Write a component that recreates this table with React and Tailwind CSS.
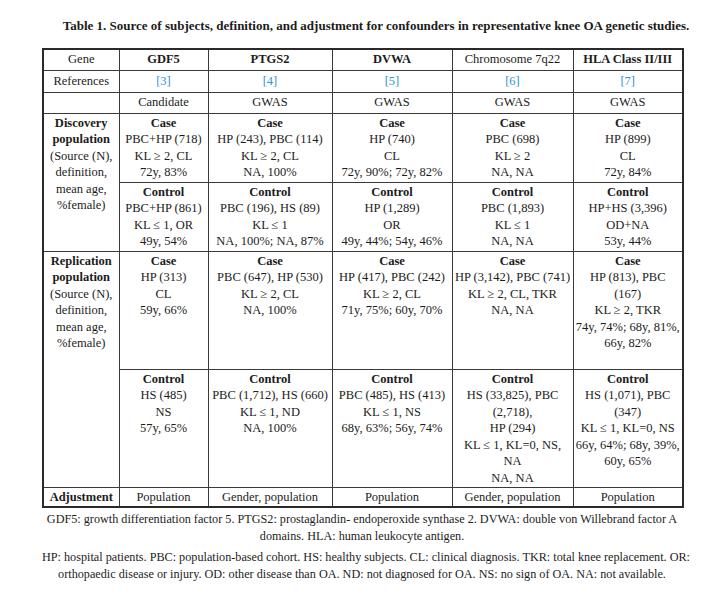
import React from "react";

const serifStack = {
  fontFamily: '"Liberation Serif", Tinos, "Times New Roman", "Noto Serif", "DejaVu Serif", serif',
};

// each cell = list of lines, first line is the bold heading
const discoveryCase = [
  ["Case", "PBC+HP (718)", "KL ≥ 2, CL", "72y, 83%"],
  ["Case", "HP (243), PBC (114)", "KL ≥ 2, CL", "NA, 100%"],
  ["Case", "HP (740)", "CL", "72y, 90%; 72y, 82%"],
  ["Case", "PBC (698)", "KL ≥ 2", "NA, NA"],
  ["Case", "HP (899)", "CL", "72y, 84%"],
];

const discoveryControl = [
  ["Control", "PBC+HP (861)", "KL ≤ 1, OR", "49y, 54%"],
  ["Control", "PBC (196), HS (89)", "KL ≤ 1", "NA, 100%; NA, 87%"],
  ["Control", "HP (1,289)", "OR", "49y, 44%; 54y, 46%"],
  ["Control", "PBC (1,893)", "KL ≤ 1", "NA, NA"],
  ["Control", "HP+HS (3,396)", "OD+NA", "53y, 44%"],
];

const replicationCase = [
  ["Case", "HP (313)", "CL", "59y, 66%"],
  ["Case", "PBC (647), HP (530)", "KL ≥ 2, CL", "NA, 100%"],
  ["Case", "HP (417), PBC (242)", "KL ≥ 2, CL", "71y, 75%; 60y, 70%"],
  ["Case", "HP (3,142), PBC (741)", "KL ≥ 2, CL, TKR", "NA, NA"],
  ["Case", "HP (813), PBC", "(167)", "KL ≥ 2, TKR", "74y, 74%; 68y, 81%,", "66y, 82%"],
];

const replicationControl = [
  ["Control", "HS (485)", "NS", "57y, 65%"],
  ["Control", "PBC (1,712), HS (660)", "KL ≤ 1, ND", "NA, 100%"],
  ["Control", "PBC (485), HS (413)", "KL ≤ 1, NS", "68y, 63%; 56y, 74%"],
  ["Control", "HS (33,825), PBC", "(2,718),", "HP (294)", "KL ≤ 1, KL=0, NS,", "NA", "NA, NA"],
  ["Control", "HS (1,071), PBC", "(347)", "KL ≤ 1, KL=0, NS", "66y, 64%; 68y, 39%,", "60y, 65%"],
];

const genes = [
  { name: "GDF5", bold: true, ref: "[3]", type: "Candidate", adj: "Population" },
  { name: "PTGS2", bold: true, ref: "[4]", type: "GWAS", adj: "Gender, population" },
  { name: "DVWA", bold: true, ref: "[5]", type: "GWAS", adj: "Population" },
  { name: "Chromosome 7q22", bold: false, ref: "[6]", type: "GWAS", adj: "Gender, population" },
  { name: "HLA Class II/III", bold: true, ref: "[7]", type: "GWAS", adj: "Population" },
];

const cell = "border border-[#3a3a3a] px-[2px] text-center align-middle whitespace-nowrap";
const topCell = "border border-[#3a3a3a] px-[2px] pt-[1px] text-center align-top leading-[16.5px]";

const GroupCell = ({ lines }) => (
  <td className={topCell} style={serifStack}>
    <div className="font-bold">{lines[0]}</div>
    {lines.slice(1).map((l, i) => (
      <div key={i} className="whitespace-nowrap">
        {l}
      </div>
    ))}
  </td>
);

const LabelCell = ({ title }) => (
  <td rowSpan={2} className={topCell} style={serifStack}>
    <div className="font-bold">{title}</div>
    <div className="font-bold">population</div>
    <div>(Source (N),</div>
    <div>definition,</div>
    <div>mean age,</div>
    <div>%female)</div>
  </td>
);

const App = () => {
  return (
    <div className="w-[720px] h-[600px] bg-white text-[#1c1c1c]" style={serifStack}>
      <div
        className="pt-[18px] pl-[32px] text-center text-[13px] leading-[16px] font-bold whitespace-nowrap"
        style={serifStack}
      >
        Table 1. Source of subjects, definition, and adjustment for confounders in representative knee OA genetic studies.
      </div>
      <div className="ml-[42px] mt-[14px] w-[640px]">
        <table
          className="w-[640px] table-fixed border-collapse border-2 border-[#2a2a2a] text-[12.5px]"
          style={serifStack}
        >
          <colgroup>
            <col className="w-[76px]" />
            <col className="w-[89px]" />
            <col className="w-[124px]" />
            <col className="w-[120px]" />
            <col className="w-[121px]" />
            <col className="w-[110px]" />
          </colgroup>
          <tbody>
            <tr className="h-[21px]">
              <td className={cell}>Gene</td>
              {genes.map((g) => (
                <td key={g.name} className={`${cell} ${g.bold ? "font-bold" : ""}`}>
                  {g.name}
                </td>
              ))}
            </tr>
            <tr className="h-[22px]">
              <td className={cell}>References</td>
              {genes.map((g) => (
                <td key={g.name} className={`${cell} text-[#2b95cf]`}>
                  {g.ref}
                </td>
              ))}
            </tr>
            <tr className="h-[21px]">
              <td className={cell}></td>
              {genes.map((g) => (
                <td key={g.name} className={cell}>
                  {g.type}
                </td>
              ))}
            </tr>
            <tr className="h-[69px]">
              <LabelCell title="Discovery" />
              {discoveryCase.map((c, i) => (
                <GroupCell key={i} lines={c} />
              ))}
            </tr>
            <tr className="h-[69px]">
              {discoveryControl.map((c, i) => (
                <GroupCell key={i} lines={c} />
              ))}
            </tr>
            <tr className="h-[118px]">
              <LabelCell title="Replication" />
              {replicationCase.map((c, i) => (
                <GroupCell key={i} lines={c} />
              ))}
            </tr>
            <tr className="h-[118px]">
              {replicationControl.map((c, i) => (
                <GroupCell key={i} lines={c} />
              ))}
            </tr>
            <tr className="h-[20px]">
              <td className={`${cell} font-bold`}>Adjustment</td>
              {genes.map((g) => (
                <td key={g.name} className={cell}>
                  {g.adj}
                </td>
              ))}
            </tr>
          </tbody>
        </table>
        <div
          className="mt-[3px] text-center text-[12.2px] leading-[17px] whitespace-nowrap"
          style={serifStack}
        >
          <div>
            GDF5: growth differentiation factor 5. PTGS2: prostaglandin- endoperoxide synthase 2. DVWA: double von Willebrand factor A
          </div>
          <div>domains. HLA: human leukocyte antigen.</div>
          <div className="mt-[4px]">
            HP: hospital patients. PBC: population-based cohort. HS: healthy subjects. CL: clinical diagnosis. TKR: total knee replacement. OR:
          </div>
          <div>orthopaedic disease or injury. OD: other disease than OA. ND: not diagnosed for OA. NS: no sign of OA. NA: not available.</div>
        </div>
      </div>
    </div>
  );
};

export default App;
